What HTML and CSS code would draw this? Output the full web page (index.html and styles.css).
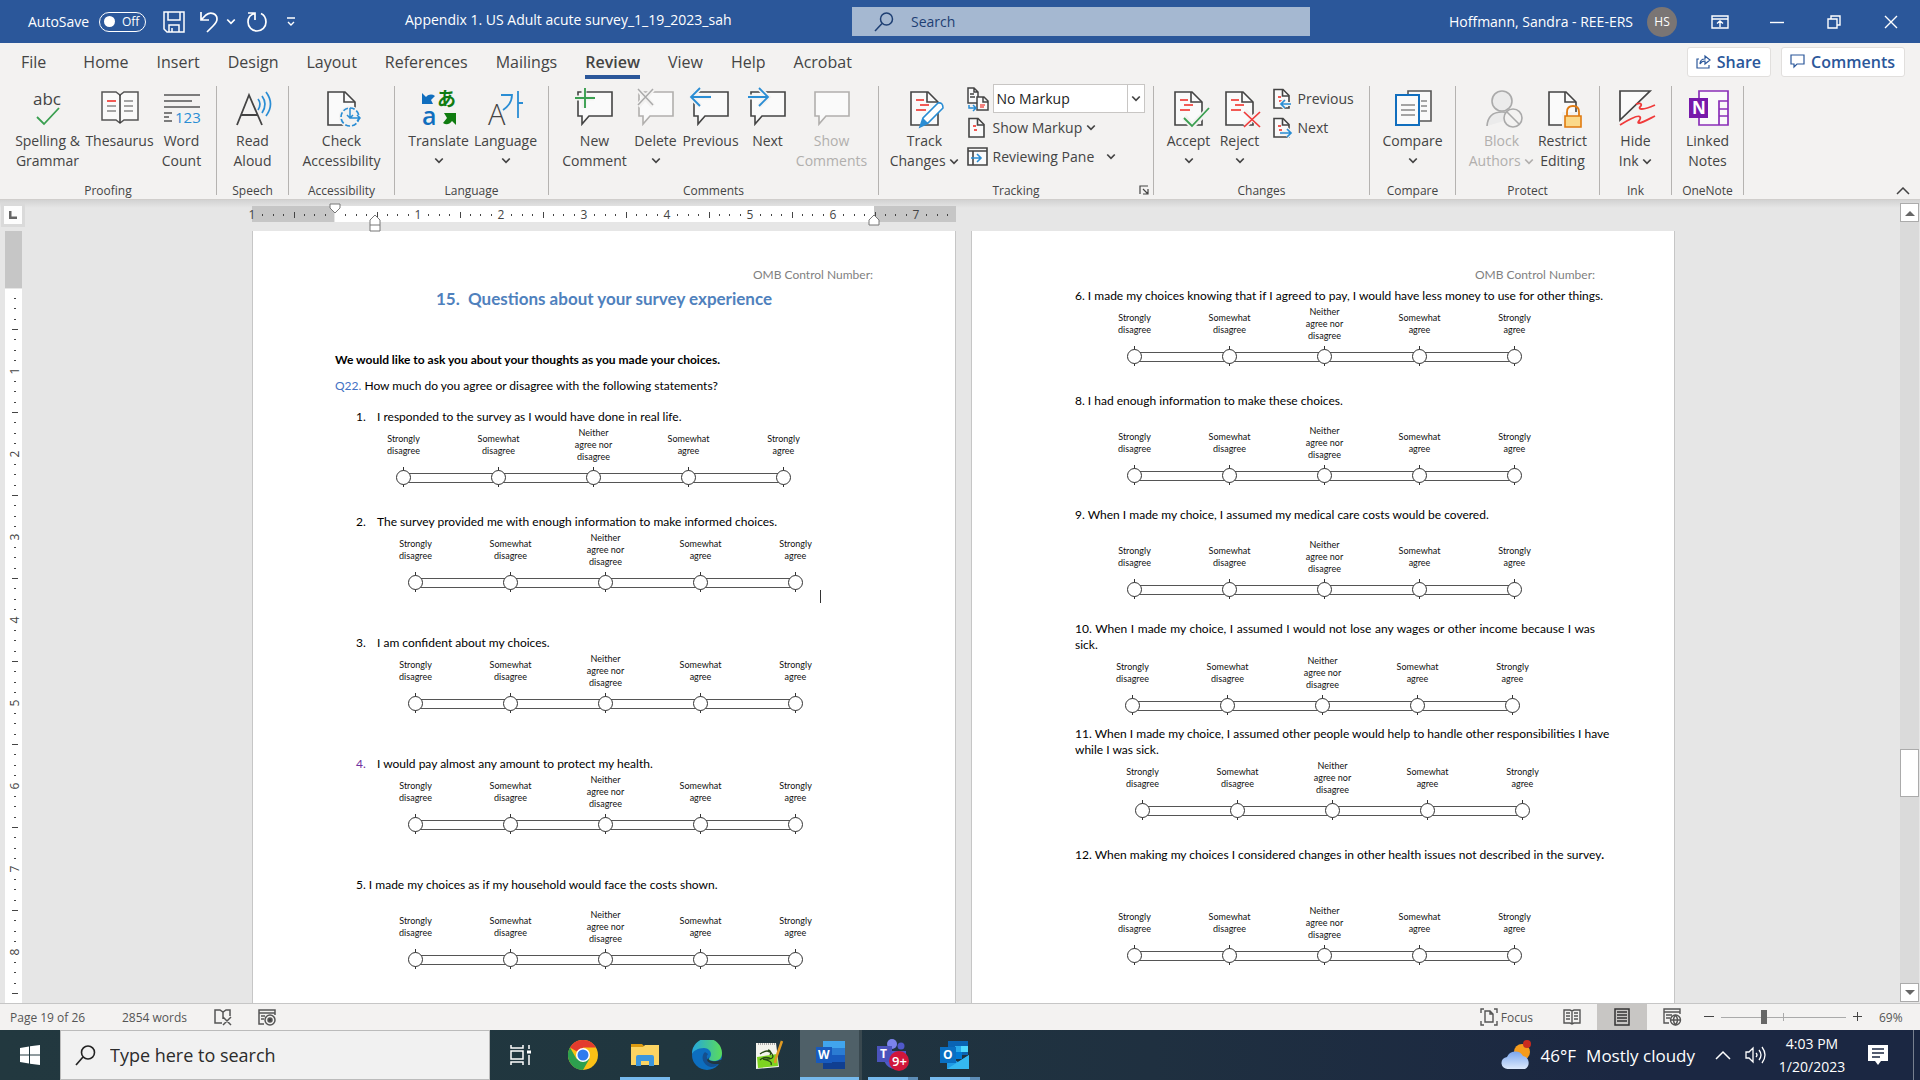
FILE: index.html
```html
<!DOCTYPE html>
<html lang="en">
<head>
<meta charset="utf-8">
<title>Appendix 1. US Adult acute survey_1_19_2023_sah</title>
<link rel="stylesheet" href="styles.css">
</head>
<body>
<svg class="defs" aria-hidden="true">
  <symbol id="chev" viewBox="0 0 8 6"><path d="M1 1l3 3 3-3" fill="none" stroke="currentColor" stroke-width="1.4"/></symbol>
  <symbol id="bubble" viewBox="0 0 40 40"><path d="M3 5h34v24H14l-7 8v-8H3z" fill="#fafafa" stroke="currentColor" stroke-width="1.6"/></symbol>
  <symbol id="sheet" viewBox="0 0 40 40"><path d="M6 5h17l10 10v23H6z" fill="#fafafa" stroke="#444" stroke-width="1.6"/><path d="M22 5v10h11" fill="none" stroke="#444" stroke-width="1.6"/></symbol>
  <symbol id="redlines" viewBox="0 0 40 40"><path d="M11 13h8M15 18h9M11 23h10" stroke="#f25a55" stroke-width="2"/></symbol>
  <symbol id="minisheet" viewBox="0 0 22 22"><path d="M2 1.500h9l6 6V20H2z" fill="#fafafa" stroke="#444" stroke-width="1.600"/><path d="M10.500 2v6H17" fill="none" stroke="#444" stroke-width="1.600"/><path d="M6 9h3M7 13h3" stroke="#f25a55" stroke-width="1.800"/></symbol>
</svg>

<header class="titlebar">
  <div class="quick">
    <span class="autosave-label" id="autosave">AutoSave</span>
    <button class="toggle" role="switch" aria-checked="false" aria-labelledby="autosave"><span class="knob"></span>Off</button>
    <button class="qbtn save" aria-label="Save"><svg width="22" height="22" viewBox="0 0 22 22" fill="none" stroke="#fff" stroke-width="1.500"><path d="M1 1h20v20H4l-3-3zM5 1v8h12V1M6 21v-7h10v7M9 21v-4"/></svg></button>
    <button class="qbtn undo" aria-label="Undo"><svg width="20" height="22" viewBox="0 0 20 22" fill="none" stroke="#fff" stroke-width="1.700"><path d="M2 1v8h8M2 9l5-5c5-4 11-1 11 4 0 3-2 5-4 7l-6 6"/></svg></button>
    <button class="qbtn" aria-label="Undo list"><svg width="10" height="8"><use href="#chev"/></svg></button>
    <button class="qbtn redo" aria-label="Repeat"><svg width="22" height="22" viewBox="0 0 22 22" fill="none" stroke="#fff" stroke-width="1.700"><path d="M2 2h7v7M9 2.500c-5 1-7 5-7 8.500a9 9 0 0 0 18 0c0-4-2-7-5-8.500"/></svg></button>
    <button class="qbtn" aria-label="Customize toolbar"><svg width="10" height="10" viewBox="0 0 10 10" fill="none" stroke="#fff" stroke-width="1.400"><path d="M1 1h8M2 5l3 3 3-3"/></svg></button>
  </div>
  <h1 class="doc-title">Appendix 1. US Adult acute survey_1_19_2023_sah</h1>
  <label class="search"><svg width="20" height="20" viewBox="0 0 20 20" fill="none" stroke="#1e3f73" stroke-width="1.500"><circle cx="12.500" cy="7" r="6"/><path d="M8 11.500L1 19"/></svg><input type="text" placeholder="Search" aria-label="Search"></label>
  <div class="account"><span>Hoffmann, Sandra - REE-ERS</span><span class="avatar">HS</span></div>
  <div class="winbtns">
    <button aria-label="Ribbon display options"><svg width="18" height="14" viewBox="0 0 18 14" fill="none" stroke="#fff" stroke-width="1.400"><path d="M1 1h16v12H1zM1 4h16M9 12V6M6 8.500L9 6l3 2.500"/></svg></button>
    <button aria-label="Minimize"><svg width="14" height="14" stroke="#fff" stroke-width="1.400"><path d="M0 7.500h14"/></svg></button>
    <button aria-label="Restore"><svg width="14" height="14" viewBox="0 0 14 14" fill="none" stroke="#fff" stroke-width="1.400"><path d="M1 4h9v9H1zM4 4V1h9v9h-3"/></svg></button>
    <button aria-label="Close"><svg width="14" height="14" stroke="#fff" stroke-width="1.400"><path d="M1 1l12 12M13 1L1 13"/></svg></button>
  </div>
</header>

<nav class="tabs">
  <a href="#file" class="file">File</a><a href="#home">Home</a><a href="#insert">Insert</a><a href="#design">Design</a><a href="#layout">Layout</a><a href="#references">References</a><a href="#mailings">Mailings</a><a href="#review" class="active">Review</a><a href="#view">View</a><a href="#help">Help</a><a href="#acrobat">Acrobat</a>
  <div class="tab-actions">
    <button><svg width="15" height="15" viewBox="0 0 15 15" fill="none" stroke="#2b579a" stroke-width="1.200"><path d="M3 5H1v9h12v-3M4 10c0-4 3-5 5-5V2l5 4-5 4V7C7 7 5 8 4 10z"/></svg>Share</button>
    <button><svg width="15" height="15" viewBox="0 0 15 15" fill="none" stroke="#2b579a" stroke-width="1.200"><path d="M1 1h13v9H7l-3 3v-3H1z"/></svg>Comments</button>
  </div>
</nav>

<section class="ribbon">
  <div class="group g-proof">
    <div class="tools">
      <button class="big w72"><svg width="40" height="40"><text x="5" y="18" class="ic-abc">abc</text><path d="M9 30l7 7 15-16" fill="none" stroke="#3a9f50" stroke-width="1.800"/></svg><span>Spelling &amp;</span><span>Grammar</span></button>
      <button class="big w72"><svg width="40" height="40" fill="none" stroke="#555" stroke-width="1.500"><path d="M2 5h14l4 3 4-3h14v28H24l-4 3-4-3H2z" fill="#fafafa"/><path d="M20 8v28" stroke="#333"/><path d="M7 19h9M7 24h9M24 14h9M24 19h9M24 24h9" stroke="#888"/><path d="M7 14h9" stroke="#f25a55" stroke-width="2"/></svg><span>Thesaurus</span></button>
      <button class="big w52"><svg width="40" height="40" stroke="#555" stroke-width="1.500"><path d="M2 8h36M2 14h28M2 20h36M2 26h8M2 30h5M2 34h8"/><text x="13" y="36" class="ic-123">123</text></svg><span>Word</span><span>Count</span></button>
    </div>
    <h2>Proofing</h2>
  </div>
  <div class="group g-72">
    <div class="tools"><button class="big w70"><svg width="40" height="40" fill="none"><path d="M4 38L16 8l13 30M8 28h17" stroke="#444" stroke-width="1.800"/><path d="M25 12q4 5 0 11M29 9q6 8 0 17M33 5q9 12 0 24" stroke="#2a8dd4" stroke-width="1.700"/></svg><span>Read</span><span>Aloud</span></button></div>
    <h2>Speech</h2>
  </div>
  <div class="group g-106">
    <div class="tools"><button class="big w100"><svg width="40" height="40" fill="none"><use href="#sheet"/><circle cx="28" cy="30" r="11" fill="#f3f2f1"/><circle cx="28" cy="30" r="9" stroke="#2a8dd4" stroke-width="1.700" stroke-dasharray="5 2"/><path d="M28 21v10h10M25 28l3 3 3-3M35 28l3 3-3 3" stroke="#2a8dd4" stroke-width="1.500"/></svg><span>Check</span><span>Accessibility</span></button></div>
    <h2>Accessibility</h2>
  </div>
  <div class="group g-154">
    <div class="tools">
      <button class="big w68"><svg width="40" height="40"><path d="M3 6l4 4c3-3 6-3 9-1l-4 4 2 4H3z" fill="#106ebe"/><text x="18" y="19" class="ic-ja">あ</text><text x="3" y="38" class="ic-a">a</text><path d="M37 38l-4-4c-3 4-6 4-9 2l4-5-3-5h12z" fill="#107c10"/></svg><span>Translate</span><svg class="cv" width="10" height="8"><use href="#chev"/></svg></button>
      <button class="big w66"><svg width="40" height="40" fill="none"><text x="2" y="38" class="ic-A">A</text><path d="M15 8h11q0 9-9 15M32 4v27M32 16h5" stroke="#2a8dd4" stroke-width="1.800"/></svg><span>Language</span><svg class="cv" width="10" height="8"><use href="#chev"/></svg></button>
    </div>
    <h2>Language</h2>
  </div>
  <div class="group g-330">
    <div class="tools">
      <button class="big w72"><svg width="40" height="40"><use href="#bubble"/><path d="M9 1v20M0 11h19" stroke="#f3f2f1" stroke-width="5"/><path d="M10 1v20M0 11h20" stroke="#3a9f50" stroke-width="1.900"/></svg><span>New</span><span>Comment</span></button>
      <button class="big w50 off"><svg width="40" height="40"><use href="#bubble"/><path d="M2 2l15 17M17 2L2 19" stroke="#f3f2f1" stroke-width="5"/><path d="M2 2l15 16M17 2L2 18" stroke="#aaa" stroke-width="1.500"/></svg><span class="on">Delete</span><svg class="cv on" width="10" height="8"><use href="#chev"/></svg></button>
      <button class="big w60"><svg width="40" height="40"><use href="#bubble"/><path d="M0 10h20M9 1l-9 9 9 9" fill="none" stroke="#f3f2f1" stroke-width="5"/><path d="M0 10h20M9 1l-9 9 9 9" fill="none" stroke="#2a8dd4" stroke-width="1.800"/></svg><span>Previous</span></button>
      <button class="big w54"><svg width="40" height="40"><use href="#bubble"/><path d="M0 10h20M11 1l9 9-9 9" fill="none" stroke="#f3f2f1" stroke-width="5"/><path d="M0 10h20M11 1l9 9-9 9" fill="none" stroke="#2a8dd4" stroke-width="1.800"/></svg><span>Next</span></button>
      <button class="big w74 off" disabled><svg width="40" height="40"><use href="#bubble"/></svg><span>Show</span><span>Comments</span></button>
    </div>
    <h2>Comments</h2>
  </div>
  <div class="group g-275">
    <div class="tools">
      <button class="big w74"><svg width="40" height="40"><use href="#sheet"/><use href="#redlines"/><path d="M15 40l3-9 15-15q5-1 5 5L23 36z" fill="#fff" stroke="#2a8dd4" stroke-width="1.600"/><path d="M15 40l3-9 5 5z" fill="#2a8dd4"/></svg><span>Track</span><span>Changes <svg class="cvi" width="10" height="8"><use href="#chev"/></svg></span></button>
      <div class="stack">
        <div class="srow"><svg width="22" height="26" viewBox="0 0 22 26" fill="#fafafa" stroke="#444" stroke-width="1.500"><path d="M1 2h6l4 4v11H1zM7 2v4h4M3 8h4M3 11h5"/><path d="M10 11h7l4 4v9H10zM16 11v5h5"/><path d="M13 19h5M13 21h4" stroke="#f25a55"/><path d="M2 19v3h6M6 19l3 3-3 3" fill="none" stroke="#2a8dd4"/></svg>
          <span class="combo"><select aria-label="Display for review"><option>No Markup</option></select><svg width="10" height="8"><use href="#chev"/></svg></span></div>
        <button class="srow"><svg width="22" height="22"><use href="#minisheet"/></svg>Show Markup <svg width="10" height="8"><use href="#chev"/></svg></button>
        <button class="srow"><svg width="22" height="22" viewBox="0 0 22 22" fill="none" stroke="#444" stroke-width="1.600"><path d="M1 2h19v17H1z" fill="#fafafa"/><path d="M1 5h19M6 5v14"/><path d="M4 12h10M10 8l4 4-4 4" stroke="#2a8dd4"/></svg>Reviewing Pane <svg class="far" width="10" height="8"><use href="#chev"/></svg></button>
      </div>
    </div>
    <h2>Tracking</h2>
    <button class="launcher" aria-label="Tracking options"><svg width="10" height="10" fill="none" stroke="#444" stroke-width="1.200"><path d="M1 9V1h8M4 4l5 5M9 4v5H4"/></svg></button>
  </div>
  <div class="group g-216">
    <div class="tools">
      <button class="big w54"><svg width="40" height="40"><use href="#sheet"/><use href="#redlines"/><path d="M15 30l8 9 17-17" fill="none" stroke="#f3f2f1" stroke-width="6"/><path d="M15 31l8 8 17-18" fill="none" stroke="#3a9f50" stroke-width="1.800"/></svg><span>Accept</span><svg class="cv" width="10" height="8"><use href="#chev"/></svg></button>
      <button class="big w48"><svg width="40" height="40"><use href="#sheet"/><use href="#redlines"/><path d="M25 24l15 15M40 24L25 39" stroke="#f3f2f1" stroke-width="5"/><path d="M24 25l16 15M40 25L24 40" stroke="#f03a3a" stroke-width="1.700"/></svg><span>Reject</span><svg class="cv" width="10" height="8"><use href="#chev"/></svg></button>
      <div class="stack">
        <button class="srow"><svg width="22" height="22"><use href="#minisheet"/><path d="M9 16h10M13 12l-4 4 4 4" fill="none" stroke="#f3f2f1" stroke-width="4"/><path d="M9 16h10M13 12l-4 4 4 4" fill="none" stroke="#2a8dd4" stroke-width="1.700"/></svg>Previous</button>
        <button class="srow"><svg width="22" height="22"><use href="#minisheet"/><path d="M8 16h11M15 12l4 4-4 4" fill="none" stroke="#f3f2f1" stroke-width="4"/><path d="M8 16h11M15 12l4 4-4 4" fill="none" stroke="#2a8dd4" stroke-width="1.700"/></svg>Next</button>
      </div>
    </div>
    <h2>Changes</h2>
  </div>
  <div class="group g-86">
    <div class="tools"><button class="big w74"><svg width="40" height="40" fill="#fafafa" stroke="#555" stroke-width="1.600"><path d="M15 4h23v30H15z"/><path d="M28 14h6M28 19h6M28 24h6" stroke="#888"/><path d="M3 8h23v30H3z" stroke="#106ebe" stroke-width="2"/><path d="M8 18h14M8 23h14M8 28h14" stroke="#888"/></svg><span>Compare</span><svg class="cv" width="10" height="8"><use href="#chev"/></svg></button></div>
    <h2>Compare</h2>
  </div>
  <div class="group g-144">
    <div class="tools">
      <button class="big w70 off" disabled><svg width="40" height="40" fill="#ebebeb" stroke="#aaa" stroke-width="1.600"><path d="M5 39q1-14 15-14 9 0 12 6"/><circle cx="20" cy="14" r="10"/><circle cx="31" cy="31" r="9" fill="#f3f2f1"/><path d="M25 25l12 12"/></svg><span>Block</span><span>Authors <svg class="cvi" width="10" height="8"><use href="#chev"/></svg></span></button>
      <button class="big w52"><svg width="40" height="40"><use href="#sheet"/><path d="M21 27h17v13H21z" fill="#f9d77e" stroke="#f3f2f1" stroke-width="4"/><path d="M24 29v-4q0-6 6-6t6 6v4" fill="none" stroke="#e07a10" stroke-width="1.800"/><path d="M22 29h16v11H22z" fill="#fbd98a" stroke="#e07a10" stroke-width="1.600"/></svg><span>Restrict</span><span>Editing</span></button>
    </div>
    <h2>Protect</h2>
  </div>
  <div class="group g-72">
    <div class="tools"><button class="big w70"><svg width="40" height="40" fill="none"><path d="M4 4h30L4 33z" fill="#fafafa" stroke="#444" stroke-width="1.700"/><path d="M4 38q18-11 20-8c2 2-4 6-1 6s10-4 16-7M20 17c6-2 6 1 4 3s2 4 15-2" stroke="#f03a3a" stroke-width="1.800"/></svg><span>Hide</span><span>Ink <svg class="cvi" width="10" height="8"><use href="#chev"/></svg></span></button></div>
    <h2>Ink</h2>
  </div>
  <div class="group g-72">
    <div class="tools"><button class="big w70"><svg width="40" height="40" fill="none" stroke="#8a2fb8" stroke-width="1.700"><path d="M11 4h29v34H11z" fill="#fafafa"/><path d="M31 38V14h9M31 22h9M31 29h9"/><path d="M1 11h19v20H1z" fill="#7719aa" stroke="none"/><text x="4" y="27" class="ic-N">N</text></svg><span>Linked</span><span>Notes</span></button></div>
    <h2>OneNote</h2>
  </div>
  <button class="collapse" aria-label="Collapse the ribbon"><svg width="14" height="8" fill="none" stroke="#444" stroke-width="1.500"><path d="M1 7l6-6 6 6"/></svg></button>
</section>

<main class="workspace">
  <aside class="side">
    <button class="tabsel" aria-label="Tab selector"><svg width="8" height="8"><path d="M1 0v7h7" fill="none" stroke="#666" stroke-width="3"/></svg></button>
    <svg class="vruler" width="17" height="772">
      <defs><pattern id="vt" width="17" height="83" patternUnits="userSpaceOnUse" y="57"><path d="M9 10h2M9 20h2M9 31h2M7 41h6M9 51h2M9 62h2M9 72h2" stroke="#444" transform="translate(0 .5)"/></pattern></defs>
      <rect width="17" height="57" fill="#c6c6c6"/><rect y="58" width="17" height="714" fill="#fff"/><rect y="58" width="17" height="714" fill="url(#vt)"/>
      <g id="vnums" class="rnum"></g>
    </svg>
  </aside>
  <div class="canvas">
    <div class="hruler">
      <svg width="706" height="16">
        <defs><pattern id="ht" width="83" height="16" patternUnits="userSpaceOnUse"><path d="M10 8v2M21 8v2M31 8v2M42 6v6M52 8v2M62 8v2M73 8v2" stroke="#444" transform="translate(.5 0)"/></pattern></defs>
        <rect width="82" height="16" fill="#c6c6c6"/><rect x="83" width="539" height="16" fill="#fff"/><rect x="622" width="82" height="16" fill="#c6c6c6"/><rect width="704" height="16" fill="url(#ht)"/>
        <g id="hnums" class="rnum"></g>
      </svg>
      <svg class="mark m1" width="12" height="12"><path d="M1 1h10v4L6 10 1 5z" fill="#fff" stroke="#777"/></svg>
      <svg class="mark m2" width="12" height="18"><path d="M1 17V6l5-5 5 5v11zM1 11h10" fill="#fff" stroke="#777"/></svg>
      <svg class="mark m3" width="12" height="12"><path d="M1 11V6l5-5 5 5v5z" fill="#fff" stroke="#777"/></svg>
    </div>
    <article class="page">
      <p class="omb">OMB Control Number:</p>
      <h2 class="sec">15.&nbsp; Questions about your survey experience</h2>
      <p class="lead">We would like to ask you about your thoughts as you made your choices.</p>
      <p class="ask"><span class="qn">Q22.</span> How much do you agree or disagree with the following statements?</p>
      <p class="q li"><span>1.</span>I responded to the survey as I would have done in real life.</p>
      <div class="scale s-a"></div>
      <p class="q li t26"><span>2.</span>The survey provided me with enough information to make informed choices.</p>
      <div class="scale s-b"></div>
      <i class="caret"></i>
      <p class="q li t42"><span>3.</span>I am confident about my choices.</p>
      <div class="scale s-b"></div>
      <p class="q li t42"><span class="rev">4.</span>I would pay almost any amount to protect my health.</p>
      <div class="scale s-b"></div>
      <p class="q in t42">5. I made my choices as if my household would face the costs shown.</p>
      <div class="scale s-b u16"></div>
    </article>
    <article class="page two">
      <p class="omb">OMB Control Number:</p>
      <p class="q top line">6. I made my choices knowing that if I agreed to pay, I would have less money to use for other things.</p>
      <div class="scale"></div>
      <p class="q t26">8. I had enough information to make these choices.</p>
      <div class="scale u16"></div>
      <p class="q t21">9. When I made my choice, I assumed my medical care costs would be covered.</p>
      <div class="scale u16"></div>
      <p class="q t21">10. When I made my choice, I assumed I would not lose any wages or other income because I was sick.</p>
      <div class="scale s-d"></div>
      <p class="q t10 line">11. When I made my choice, I assumed other people would help to handle other responsibilities I have<br>while I was sick.</p>
      <div class="scale s-e"></div>
      <p class="q t26 line">12. When making my choices I considered changes in other health issues not described in the survey<b>.</b></p>
      <div class="scale u42"></div>
    </article>
  </div>
  <div class="scroll">
    <button aria-label="Scroll up"><svg width="10" height="6"><path d="M0 6l5-5 5 5z" fill="#666"/></svg></button>
    <div class="track"><div class="thumb"></div></div>
    <button aria-label="Scroll down"><svg width="10" height="6"><path d="M0 0l5 5 5-5z" fill="#666"/></svg></button>
  </div>
</main>

<footer class="status">
  <span class="st-page">Page 19 of 26</span><span class="st-words">2854 words</span>
  <button class="st-i" aria-label="Proofing errors"><svg width="18" height="18" viewBox="0 0 18 18" fill="none" stroke="#555" stroke-width="1.500"><path d="M8 15H1V2h5l3 2 3-2h4v6M9 4v7M9 9l8 8M17 9l-8 8"/></svg></button>
  <button class="st-i" aria-label="Macro recording"><svg width="18" height="18" viewBox="0 0 18 18" fill="none" stroke="#555" stroke-width="1.500"><path d="M6 16H1V2h16v5M1 5h16M3 8h4M3 11h3"/><circle cx="12" cy="12" r="5"/><circle cx="12" cy="12" r="2" fill="#444"/></svg></button>
  <div class="st-right">
    <button class="focus"><svg width="18" height="18" viewBox="0 0 18 18" fill="none" stroke="#555" stroke-width="1.400"><path d="M1 5V1h3M14 1h3v4M17 13v4h-3M4 17H1v-4M5 3h5l3 3v8H5zM10 3v3h3"/></svg>Focus</button>
    <button class="view" aria-label="Read mode"><svg width="18" height="18" viewBox="0 0 18 18" fill="none" stroke="#555" stroke-width="1.400"><path d="M1 2h6l2 1 2-1h6v13h-6l-2 1-2-1H1zM9 3v13M3 5h4M3 8h4M3 11h4M11 5h4M11 8h4M11 11h4"/></svg></button>
    <button class="view sel" aria-label="Print layout"><svg width="16" height="18" viewBox="0 0 16 18" fill="none" stroke="#333" stroke-width="1.500"><path d="M1 1h14v16H1zM3 4h10M3 7h10M3 10h10M3 13h10"/></svg></button>
    <button class="view" aria-label="Web layout"><svg width="19" height="18" viewBox="0 0 19 18" fill="none" stroke="#555" stroke-width="1.400"><path d="M6 15H1V1h16v5M1 4h16M3 7h6M3 10h4"/><circle cx="12.500" cy="12" r="5"/><path d="M8 12h9M12.500 7q-4 5 0 10M12.500 7q4 5 0 10"/></svg></button>
    <button class="zb" aria-label="Zoom out"><svg width="10" height="10" stroke="#444"><path d="M0 4.500h10"/></svg></button>
    <input class="zoom" type="range" min="10" max="190" value="71" aria-label="Zoom">
    <button class="zb" aria-label="Zoom in"><svg width="10" height="10" stroke="#444"><path d="M0 4.500h9M4.500 0v9"/></svg></button>
    <span class="pct">69%</span>
  </div>
</footer>

<div class="taskbar">
  <button class="start" aria-label="Start"><svg width="20" height="20" fill="#fff"><path d="M0 3l9-1.500V9.500H0zM10 1.300L20 0v9.500H10zM0 10.500h9v8L0 17zM10 10.500h10V20l-10-1.300z"/></svg></button>
  <label class="tsearch"><svg width="21" height="21" viewBox="0 0 21 21" fill="none" stroke="#222" stroke-width="1.600"><circle cx="13" cy="7.500" r="6.500"/><path d="M8 12L1 20"/></svg><input type="text" placeholder="Type here to search" aria-label="Type here to search"></label>
  <button class="tile" aria-label="Task view"><svg width="22" height="20" fill="none" stroke="#fff" stroke-width="1.500"><path d="M1 0v3h12V0M1 20v-3h12v3M1 6h12v8H1zM19 0v4M19 10v10"/><path d="M17 7h4" stroke-width="3"/></svg></button>
  <button class="tile" aria-label="Chrome"><svg width="30" height="30" viewBox="0 0 30 30"><circle cx="15" cy="15" r="15" fill="#fbc116"/><path d="M15 15L2 7.500A15 15 0 0 1 28 7.500H15z" fill="#e33b2e"/><path d="M2 7.500A15 15 0 0 0 15 30l6.500-11.300L8.500 18.700z" fill="#2da04e"/><circle cx="15" cy="15" r="7" fill="#fff"/><circle cx="15" cy="15" r="5.500" fill="#2f7bee"/></svg></button>
  <button class="tile open" aria-label="File Explorer"><svg width="28" height="24" viewBox="0 0 28 24"><path d="M0 1h11l3 3H0z" fill="#dc9a10"/><path d="M0 4h12l2-2h14v20H0z" fill="#fcd462"/><path d="M5 23V14q0-2 2-2h14q2 0 2 2v9h-5v-5h-8v5z" fill="#3c96dd"/></svg></button>
  <button class="tile" aria-label="Edge"><svg width="30" height="30" viewBox="0 0 30 30"><defs><linearGradient id="e1"><stop offset="0" stop-color="#24a6df"/><stop offset="1" stop-color="#5bdc5a"/></linearGradient></defs><circle cx="15" cy="15" r="15" fill="#0d6ebf"/><path d="M0 14A15 15 0 0 1 30 13c0 6-4 8-8 8-3 0-5-1-5-2s2-2 2-5-3-6-7-6C6 8 1 11 0 14z" fill="url(#e1)"/><path d="M13 12c-5 4-2 14 6 15 4 0 7-2 9-5-6 2-12 0-13-4q-1-2 1-4z" fill="#154f8e"/><path d="M17 17q-2 3 3 4 4 1 8-1 2-1 1 1l-1 3q-3 0-6 0-6-1-7-4z" fill="#22363f"/></svg></button>
  <button class="tile" aria-label="Notepad++"><svg width="30" height="30" viewBox="0 0 30 30"><path d="M2 3h20l3 24-23 2z" fill="#f4f4ee"/><path d="M3 17l20-3 1 12-20 2z" fill="#7ed321"/><path d="M6 14q8-6 12 0t-9 5q10 2 8 6M6 20q4-4 10-2M14 10q4 1 2 5" stroke="#274b17" fill="none" stroke-width="1.300"/><path d="M4 4h17" stroke="#aaa" stroke-width="2" stroke-dasharray="1 1"/><path d="M28 1l-6 17-1 5" stroke="#e09a22" stroke-width="2.500" fill="none"/></svg></button>
  <button class="tile open cur" aria-label="Word"><svg width="30" height="28" viewBox="0 0 30 28"><path d="M7 0h22v7H7z" fill="#41a5ee"/><path d="M7 7h22v7H7z" fill="#2b7cd3"/><path d="M7 14h22v7H7z" fill="#185abd"/><path d="M7 21h22v7H7z" fill="#103f91"/><path d="M0 6h16v16H0z" fill="#185abd"/><text x="2" y="18" class="ic-app">W</text></svg></button>
  <button class="tile open more" aria-label="Teams"><svg width="34" height="32" viewBox="0 0 34 32"><circle cx="16" cy="5" r="5" fill="#7b83eb"/><circle cx="25" cy="7" r="3.500" fill="#5059c9"/><path d="M8 12h22v10q-4 8-11 8t-11-8z" fill="#5059c9"/><path d="M1 7h15v16H1z" fill="#4b53bc"/><text x="4" y="19" class="ic-app">T</text><circle cx="23" cy="22" r="10" fill="#d0163b"/><text x="16" y="27" class="ic-nine">9+</text></svg></button>
  <button class="tile open more" aria-label="Outlook"><svg width="30" height="28" viewBox="0 0 30 28"><path d="M8 0h20v14H8z" fill="#0a64b4"/><path d="M15 5h7v6h-7z" fill="#28a8ea"/><path d="M21 5h7v6h-7z" fill="#50d9ff"/><path d="M8 11h14v7H8z" fill="#0078d4"/><path d="M7 14l11 7 11-7v14H7z" fill="#1f9be6"/><path d="M7 28l22-14v14z" fill="#35b8f1"/><path d="M0 6h16v16H0z" fill="#0a6fc2"/><text x="3" y="18" class="ic-app">O</text></svg></button>
  <div class="tray">
    <a class="weather" href="#weather"><svg width="30" height="30" viewBox="0 0 30 30"><defs><linearGradient id="cl" x2="0" y2="1"><stop offset="0" stop-color="#7ba6ee"/><stop offset="1" stop-color="#dce9fc"/></linearGradient></defs><circle cx="21" cy="12" r="8" fill="#f59b1c"/><circle cx="26" cy="4" r="4" fill="#c92a1e"/><path d="M7 29a6 6 0 0 1-1-12 9 9 0 0 1 16-1 7 7 0 0 1 2 13z" fill="url(#cl)"/></svg><span>46°F</span><span>Mostly cloudy</span></a>
    <button class="tr-i" aria-label="Hidden icons"><svg width="16" height="10" fill="none" stroke="#fff" stroke-width="1.500"><path d="M1 9l7-7 7 7"/></svg></button>
    <button class="tr-i" aria-label="Volume"><svg width="22" height="18" fill="none" stroke="#fff" stroke-width="1.300"><path d="M1 6h3l4-4v14l-4-4H1zM11 7q2 2 0 4M14 4q4 5 0 10M17 1q6 8 0 16"/></svg></button>
    <time class="clock">4:03 PM<br>1/20/2023</time>
    <button class="note" aria-label="Notifications"><svg width="20" height="20"><path d="M0 0h20v16h-7l-3 4-3-4H0z" fill="#fff"/><path d="M4 4h12M4 8h12M4 12h8" stroke="#1b2742" stroke-width="1.300"/></svg></button>
  </div>
</div>
<script src="script.js"></script>
</body>
</html>
```
FILE: styles.css
```css
* { box-sizing: border-box; }
body { margin: 0; height: 100vh; display: flex; flex-direction: column; overflow: hidden; font-family: "Open Sans", "Noto Sans", sans-serif; font-size: 14px; color: #444; background: #e6e6e6; }
button { font: inherit; color: inherit; background: none; border: 0; padding: 0; margin: 0; }
a { color: inherit; text-decoration: none; }
h1, h2, p { margin: 0; font-weight: 400; }
svg { display: block; flex: none; }
.defs { position: absolute; width: 0; height: 0; }

.titlebar { height: 43px; flex: none; display: grid; grid-template-columns: 405px 447px minmax(0, 1fr) 373px 237px; align-items: center; background: #2b579a; color: #fff; }
.quick { display: flex; align-items: center; padding-left: 28px; }
.autosave-label { width: 71px; }
.toggle { width: 47px; height: 20px; border: 1px solid #fff; border-radius: 10px; display: flex; align-items: center; gap: 7px; padding-left: 4px; font-size: 12px; }
.knob { width: 11px; height: 11px; border-radius: 50%; background: #fff; }
.save { margin-left: 17px; }
.undo { margin-left: 14px; margin-right: 7px; }
.redo { margin-left: 10px; margin-right: 18px; }
.doc-title { font-size: 14px; line-height: 20px; padding-bottom: 3px; white-space: nowrap; }
.search { height: 29px; background: #a5b8d1; display: flex; align-items: center; gap: 17px; padding-left: 22px; }
.search input, .tsearch input { border: 0; background: none; font: inherit; flex: 1; outline: 0; padding: 0; min-width: 0; }
.search input::placeholder { color: #1e3f73; opacity: 1; }
.account { display: flex; align-items: center; justify-content: flex-end; gap: 14px; padding-right: 6px; white-space: nowrap; }
.avatar { width: 30px; height: 30px; border-radius: 50%; background: #7a7574; font-size: 12px; line-height: 30px; text-align: center; }
.winbtns { display: grid; grid-template-columns: repeat(4, 57px); padding-left: 8px; }
.winbtns button { display: flex; justify-content: center; }

.tabs { height: 37px; flex: none; display: flex; align-items: center; gap: 28px; padding: 0 15px 0 21px; background: #f3f2f1; font-size: 16px; }
.tabs a { height: 37px; line-height: 39px; }
.tabs .file { margin-right: 9px; }
.tabs .active { font-weight: 600; border-bottom: 4px solid #2b579a; height: 36px; align-self: flex-start; }
.tab-actions { margin-left: auto; display: flex; gap: 10px; }
.tab-actions button { height: 30px; border: 1px solid #e1dfdd; border-radius: 3px; background: #fff; color: #2b579a; font-weight: 600; display: flex; align-items: center; gap: 6px; padding: 0 9px 0 8px; }

.ribbon { height: 120px; flex: none; display: flex; background: #f3f2f1; padding-top: 6px; border-bottom: 1px solid #d0cecc; }
.group { position: relative; height: 109px; border-right: 1px solid #b5b3b1; flex: none; }
.tools { display: flex; justify-content: center; height: 97px; }
.group h2 { font-size: 12px; line-height: 16px; text-align: center; }
.g-proof { width: 217px; } .g-72 { width: 72px; } .g-106 { width: 106px; } .g-154 { width: 154px; }
.g-330 { width: 330px; } .g-275 { width: 275px; } .g-216 { width: 216px; } .g-86 { width: 86px; } .g-144 { width: 144px; }
.g-proof .tools { padding-left: 3px; }
.big { line-height: 20px; flex: none; display: flex; flex-direction: column; align-items: center; white-space: nowrap; padding-top: 1px; }
.big > svg:first-child { margin-bottom: 4px; overflow: visible; }
.big span { display: block; }
.cv { margin-top: 6px; }
.cvi { display: inline-block; vertical-align: middle; }
.off { color: #b1afad; } .off .on { color: #444; }
.w48 { width: 48px; } .w50 { width: 50px; } .w52 { width: 52px; } .w54 { width: 54px; } .w60 { width: 60px; } .w66 { width: 66px; }
.w68 { width: 68px; } .w70 { width: 70px; } .w72 { width: 72px; } .w74 { width: 74px; } .w100 { width: 100px; }
.stack { display: flex; flex-direction: column; margin: -2px 0 0 5px; }
.g-216 .stack { margin-left: 8px; width: 90px; }
.srow { display: flex; align-items: center; height: 29px; gap: 4px; white-space: nowrap; }
.srow .far { margin-left: 8px; }
.combo { display: grid; width: 152px; height: 29px; background: #fff; border: 1px solid #c8c6c4; align-items: center; }
.combo select { grid-area: 1/1; appearance: none; border: 0; background: none; height: 27px; font: inherit; color: #222; padding: 0 3px; margin-right: 16px; border-right: 1px solid #c8c6c4; border-radius: 0; }
.combo svg { grid-area: 1/1; justify-self: end; margin-right: 3px; pointer-events: none; }
.launcher { position: absolute; right: 4px; bottom: 0; }
.collapse { margin-left: auto; align-self: flex-end; padding: 0 10px 4px 0; }
.ic-abc { font-size: 17px; fill: #444; }
.ic-123 { font-size: 15px; fill: #2a8dd4; stroke: none; }
.ic-ja { font: 700 19px "Noto Sans CJK JP", sans-serif; fill: #107c10; }
.ic-a { font: 600 25px "Open Sans", sans-serif; fill: #106ebe; }
.ic-A { font: 300 29px "Open Sans", sans-serif; fill: #444; }
.ic-N { font-size: 17px; font-weight: 700; fill: #fff; stroke: none; }
.ic-app { font-size: 12px; font-weight: 700; fill: #fff; }
.ic-nine { font-size: 13px; font-weight: 600; fill: #fff; }

.workspace { flex: 1; min-height: 0; display: flex; overflow: hidden; background: linear-gradient(#d2d2d2, #e6e6e6 8px); }
.side { width: 27px; flex: none; padding: 3px 0 0 1px; }
.tabsel { width: 24px; height: 24px; margin-bottom: 4px; border: 3px solid #dadada; background: #fdfdfd; display: flex; align-items: center; justify-content: center; }
.vruler { margin-left: 4px; }
.rnum { font-size: 12px; fill: #444; text-anchor: middle; }
.canvas { flex: 1; display: grid; grid-template-columns: 704px 704px; grid-template-rows: 31px 1fr; column-gap: 15px; justify-content: center; }
.hruler { grid-column: 1 / -1; padding-top: 6px; position: relative; }
.hruler svg { overflow: visible; }
.mark { position: absolute; z-index: 1; }
.m1 { left: 77px; top: 3px; } .m2 { left: 117px; top: 14px; } .m3 { left: 616px; top: 14px; }
.page { background: #fff; border: 1px solid #c6c6c6; border-width: 0 1px; padding: 36px 82px 0; font-family: Lato, sans-serif; font-size: 12px; line-height: 16px; color: #000; overflow: hidden; position: relative; }
.page.two { padding-left: 103px; padding-right: 79px; }
.omb { text-align: right; color: #7f7f7f; }
.sec { margin-top: 6px; text-align: center; font-size: 17px; line-height: 20px; font-weight: 700; color: #4f81bd; }
.lead { margin-top: 43px; font-weight: 700; }
.ask { margin-top: 10px; } .qn { color: #4472c4; }
.q { text-align: justify; }
.line { white-space: nowrap; }
.ask + .q { margin-top: 15px; }
.li { padding-left: 42px; } .li span { display: inline-block; width: 21px; margin-left: -21px; } .li .rev { color: #7030a0; }
.in { padding-left: 21px; }
.top { margin-top: 5px; }
.t10 { margin-top: 10px; } .t21 { margin-top: 21px; } .t26 { margin-top: 26px; } .t42 { margin-top: 42px; }
.scale { display: grid; grid-template-columns: repeat(5, 95px); margin-top: 2px; margin-left: 12px; width: 475px; position: relative; }
.s-a { margin-left: 21px; } .s-b { margin-left: 33px; } .s-d { margin-left: 10px; } .s-e { margin-left: 20px; }
.u16 { margin-top: 16px; } .u42 { margin-top: 42px; }
.scale::before { content: ""; position: absolute; left: 48px; right: 48px; top: 46px; height: 8px; border: 1px solid #555; border-width: 1px 0; }
.scale label { display: flex; flex-direction: column; align-items: center; position: relative; font-size: 9px; line-height: 12px; color: #111; text-align: center; }
.scale span { height: 36px; display: flex; align-items: center; white-space: pre-line; }
.scale label::before { content: ""; position: absolute; top: 40px; left: 47px; width: 1px; height: 20px; background: #333; }
.scale input { appearance: none; margin: 7px 0 3px; width: 15px; height: 15px; border: 1px solid #333; border-radius: 50%; background: #fff; position: relative; }
.caret { position: absolute; left: 567px; top: 359px; width: 1px; height: 13px; background: #333; }
.scroll { width: 20px; flex: none; padding: 3px 1px 1px 0; display: flex; flex-direction: column; }
.scroll button { height: 19px; background: #fff; border: 1px solid #ababab; display: flex; align-items: center; justify-content: center; }
.track { flex: 1; background: #dadada; padding-top: 527px; }
.thumb { height: 48px; background: #fff; border: 1px solid #ababab; }

.status { height: 27px; flex: none; border-top: 1px solid #c6c6c6; background: #f3f2f1; display: flex; align-items: center; font-size: 12px; color: #555; padding-left: 10px; }
.st-page { width: 112px; } .st-words { width: 92px; } .st-i { width: 44px; }
.st-right { margin-left: auto; display: flex; align-items: center; height: 100%; }
.focus { display: flex; align-items: center; gap: 3px; margin-right: 14px; }
.view { width: 50px; height: 100%; display: flex; align-items: center; justify-content: center; }
.sel { background: #c8c6c4; }
.zb { margin: 0 7px; }
.zoom { appearance: none; width: 125px; height: 14px; margin: 0; background: linear-gradient(#aaa, #aaa) center/100% 1px no-repeat, linear-gradient(#aaa, #aaa) center/1px 8px no-repeat; }
.zoom::-webkit-slider-thumb { appearance: none; width: 6px; height: 14px; background: #666; }
.pct { width: 50px; padding-left: 9px; }

.taskbar { height: 50px; flex: none; display: flex; background: linear-gradient(90deg, #22383f, #20363f 35%, #1f3040 60%, #1b2742 85%); color: #fff; }
.start { width: 60px; display: flex; align-items: center; justify-content: center; }
.tsearch { width: 430px; border: 1px solid #bbb; background: #f1f1f1; display: flex; align-items: center; gap: 14px; padding-left: 14px; font-size: 18px; }
.tsearch input::placeholder { color: #2b2b2b; opacity: 1; }
.tile { width: 62px; display: flex; align-items: center; justify-content: center; position: relative; }
.open::after { content: ""; position: absolute; left: 6px; right: 6px; bottom: 0; height: 3px; background: #76b9ed; }
.more::after { background: linear-gradient(90deg, #76b9ed 40px, #5d8cb5 40px); }
.cur { background: #4f6068; border-right: 3px solid #39484f; padding-left: 3px; }
.cur::after { left: 0; right: 0; }
.tray { margin-left: auto; display: flex; align-items: center; padding-right: 6px; }
.weather { display: flex; align-items: center; gap: 10px; font-size: 17px; white-space: nowrap; }
.tr-i { margin-left: 14px; }
.weather + .tr-i { margin-left: 20px; }
.clock { width: 90px; text-align: center; line-height: 23px; font-size: 14px; }
.note { padding: 0 25px 0 11px; height: 50px; border-right: 1px solid #77808f; }
```
FILE: script.js
```js
// Fills every answer scale with its five labelled radio buttons.
const answers = ["Strongly\ndisagree", "Somewhat\ndisagree", "Neither\nagree nor\ndisagree", "Somewhat\nagree", "Strongly\nagree"];
document.querySelectorAll(".scale").forEach((scale, n) => {
  scale.innerHTML = answers.map(a => `<label><span>${a}</span><input type="radio" name="s${n}"></label>`).join("");
});

// Inch numbers on both rulers, 83px to the inch.
const inch = 83;
const h = [1, "", 1, 2, 3, 4, 5, 6, 7];
document.getElementById("hnums").innerHTML = h.map((t, i) => `<text x="${i * inch}" y="13">${t}</text>`).join("");
let v = "";
for (let i = 1; i < 9; i++) v += `<text transform="translate(14 ${57 + i * inch}) rotate(-90)">${i}</text>`;
document.getElementById("vnums").innerHTML = v;
```
